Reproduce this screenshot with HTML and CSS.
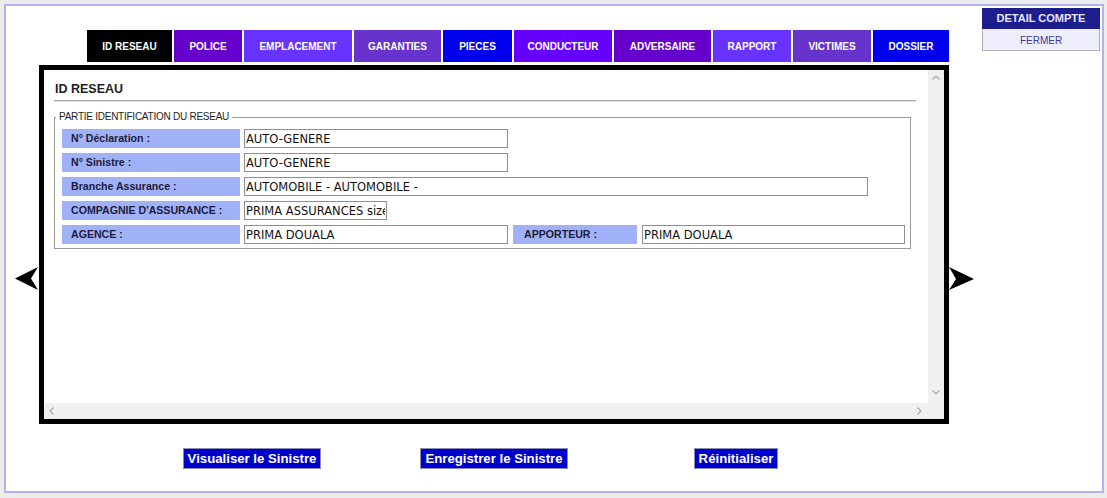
FILE: index.html
```html
<!DOCTYPE html>
<html lang="fr">
<head>
<meta charset="utf-8">
<title>ID RESEAU</title>
<link rel="stylesheet" href="styles.css">
</head>
<body>
<div class="frame">
  <div class="top">
    <nav class="tabs">
      <div class="tab c-black w-id">ID RESEAU</div>
      <div class="tab c-purple w-police">POLICE</div>
      <div class="tab c-violet w-empl">EMPLACEMENT</div>
      <div class="tab c-mauve w-gar">GARANTIES</div>
      <div class="tab c-blue w-pieces">PIECES</div>
      <div class="tab c-bright w-cond">CONDUCTEUR</div>
      <div class="tab c-purple w-adv">ADVERSAIRE</div>
      <div class="tab c-violet w-rap">RAPPORT</div>
      <div class="tab c-mauve w-vic">VICTIMES</div>
      <div class="tab c-blue w-dos">DOSSIER</div>
    </nav>
    <div class="account">
      <div class="account-head">DETAIL COMPTE</div>
      <div class="account-close">FERMER</div>
    </div>
  </div>

  <div class="middle">
    <svg class="nav-arrow nav-left" width="24" height="24" viewBox="0 0 24 24"><polygon points="0,11.5 23,0 16,11.5 23,23" fill="#000"/></svg>
    <div class="box">
      <div class="pane">
        <h1 class="title">ID RESEAU</h1>
        <div class="rule"></div>
        <fieldset class="group">
          <legend>PARTIE IDENTIFICATION DU RESEAU</legend>
          <div class="row">
            <div class="label">N° Déclaration :</div>
            <input class="field w-std" type="text" value="AUTO-GENERE">
          </div>
          <div class="row">
            <div class="label">N° Sinistre :</div>
            <input class="field w-std" type="text" value="AUTO-GENERE">
          </div>
          <div class="row">
            <div class="label">Branche Assurance :</div>
            <input class="field w-long" type="text" value="AUTOMOBILE - AUTOMOBILE -">
          </div>
          <div class="row">
            <div class="label">COMPAGNIE D'ASSURANCE :</div>
            <input class="field w-short" type="text" value="PRIMA ASSURANCES sizeable">
          </div>
          <div class="row">
            <div class="label">AGENCE :</div>
            <input class="field w-std" type="text" value="PRIMA DOUALA">
            <div class="label label-small">APPORTEUR :</div>
            <input class="field w-app" type="text" value="PRIMA DOUALA">
          </div>
        </fieldset>
      </div>
      <div class="vbar">
        <svg width="8" height="5" viewBox="0 0 8 5"><polyline points="0.5,4.5 4,1 7.5,4.5" fill="none" stroke="#a6a6a6" stroke-width="1.2"/></svg>
        <svg width="8" height="5" viewBox="0 0 8 5"><polyline points="0.5,0.5 4,4 7.5,0.5" fill="none" stroke="#a6a6a6" stroke-width="1.2"/></svg>
      </div>
      <div class="hbar">
        <svg width="5" height="8" viewBox="0 0 5 8"><polyline points="4.5,0.5 1,4 4.5,7.5" fill="none" stroke="#a6a6a6" stroke-width="1.2"/></svg>
        <svg width="5" height="8" viewBox="0 0 5 8"><polyline points="0.5,0.5 4,4 0.5,7.5" fill="none" stroke="#a6a6a6" stroke-width="1.2"/></svg>
      </div>
      <div class="corner"></div>
    </div>
    <svg class="nav-arrow nav-right" width="25" height="24" viewBox="0 0 25 24"><polygon points="0,0 25,12 0,23 7,12" fill="#000"/></svg>
  </div>

  <div class="actions">
    <div class="cell"><button class="btn" type="button">Visualiser le Sinistre</button></div>
    <div class="cell"><button class="btn" type="button">Enregistrer le Sinistre</button></div>
    <div class="cell"><button class="btn" type="button">Réinitialiser</button></div>
  </div>
</div>
</body>
</html>
```

FILE: styles.css
```css
html, body {
  margin: 0;
  padding: 0;
}
body {
  background: #ececec;
  font-family: "Liberation Sans", Arial, sans-serif;
  width: 1107px;
  height: 498px;
  overflow: hidden;
}
.frame {
  margin: 4px 0 0 4px;
  width: 1096px;
  height: 485px;
  border: 2px solid #b3b3ec;
  background: #ffffff;
}

/* top row */
.top {
  display: flex;
  align-items: flex-start;
  height: 56px;
}
.tabs {
  display: flex;
  gap: 2px;
  margin: 24px 0 0 81px;
}
.tab {
  height: 32px;
  line-height: 34px;
  text-align: center;
  color: #ffffff;
  font-weight: bold;
  font-size: 10px;
  white-space: nowrap;
  overflow: hidden;
}
.c-black { background: #000000; }
.c-purple { background: #6600cc; }
.c-violet { background: #6633ff; }
.c-mauve { background: #6633cc; }
.c-blue { background: #0000ee; }
.c-bright { background: #6600ff; }
.w-id { width: 85px; }
.w-police { width: 68px; }
.w-empl { width: 108px; }
.w-gar { width: 87px; }
.w-pieces { width: 69px; }
.w-cond { width: 98px; }
.w-adv { width: 97px; }
.w-rap { width: 78px; }
.w-vic { width: 78px; }
.w-dos { width: 76px; }

.account {
  margin: 2px 2px 0 auto;
  width: 118px;
}
.account-head {
  height: 21px;
  line-height: 21px;
  background: #1d1d8e;
  color: #e6e6ff;
  font-weight: bold;
  font-size: 11px;
  text-align: center;
}
.account-close {
  box-sizing: border-box;
  height: 22px;
  padding-top: 2px;
  line-height: 20px;
  background: #ededfb;
  color: #3a3aa0;
  font-size: 10px;
  text-align: center;
  border: 1px solid #b0b0b0;
  border-top: none;
}

/* middle row */
.middle {
  display: flex;
  align-items: flex-start;
  margin-top: 3px;
}
.nav-arrow {
  display: block;
  margin-top: 202px;
  flex: none;
}
.nav-left { margin-left: 9px; }

.box {
  width: 900px;
  height: 349px;
  border: 5px solid #000000;
  display: grid;
  grid-template-columns: 884px 16px;
  grid-template-rows: 333px 16px;
  background: #ffffff;
}
.pane {
  padding: 12px 0 0 10px;
  overflow: hidden;
}
.title {
  margin: 0 0 0 1px;
  font-size: 12.5px;
  line-height: 15px;
  font-weight: bold;
  color: #1e1e1e;
}
.rule {
  width: 862px;
  height: 1px;
  margin-top: 3px;
  background: #a8a8a8;
  border-bottom: 1px solid #e2e2e2;
}

.group {
  margin: 9px 0 0 0;
  width: 843px;
  border: 1px solid #9a9a9a;
  padding: 6px 5px 4px 7px;
}
.group legend {
  padding: 0 3px;
  margin-left: -6px;
  font-size: 10px;
  letter-spacing: -0.25px;
  color: #1e1e1e;
  line-height: 12px;
}
.row {
  display: flex;
  align-items: center;
  gap: 4px;
  height: 19px;
  margin-bottom: 5px;
}
.row:last-child { margin-bottom: 0; }
.label {
  box-sizing: border-box;
  width: 178px;
  height: 19px;
  line-height: 19px;
  padding-left: 9px;
  background: #a1b1f7;
  color: #1c1c3c;
  font-weight: bold;
  font-size: 10.6px;
  white-space: nowrap;
}
.label-small {
  width: 124px;
  margin-left: 1px;
  padding-left: 11px;
}
.field {
  box-sizing: border-box;
  height: 19px;
  margin: 0;
  padding: 0 1px;
  border: 1px solid #8f8f8f;
  border-radius: 0;
  background: #ffffff;
  font-family: "DejaVu Sans", Verdana, sans-serif;
  font-size: 11.5px;
  color: #111111;
  outline: none;
}
.w-std { width: 264px; }
.w-long { width: 624px; }
.w-short { width: 143px; }
.w-app { width: 263px; margin-left: 1px; }

/* scrollbars */
.vbar {
  background: #f0f0f0;
  display: flex;
  flex-direction: column;
  align-items: center;
  justify-content: space-between;
  padding: 5px 0 8px;
}
.hbar {
  background: #f0f0f0;
  display: flex;
  align-items: center;
  justify-content: space-between;
  padding: 0 6px 0 5px;
}
.vbar svg, .hbar svg { display: block; }
.corner { background: #f0f0f0; }

/* buttons */
.actions {
  display: grid;
  grid-template-columns: 242px 242px 242px;
  margin: 24px 0 0 125px;
  justify-items: center;
}
.btn {
  height: 21px;
  margin: 0;
  padding: 0 4px;
  background: #0000cc;
  color: #ffffff;
  border: 1px solid #8c8cb4;
  border-radius: 0;
  font-family: "Liberation Sans", Arial, sans-serif;
  font-weight: bold;
  font-size: 13.2px;
  line-height: 19px;
  cursor: pointer;
}
```
